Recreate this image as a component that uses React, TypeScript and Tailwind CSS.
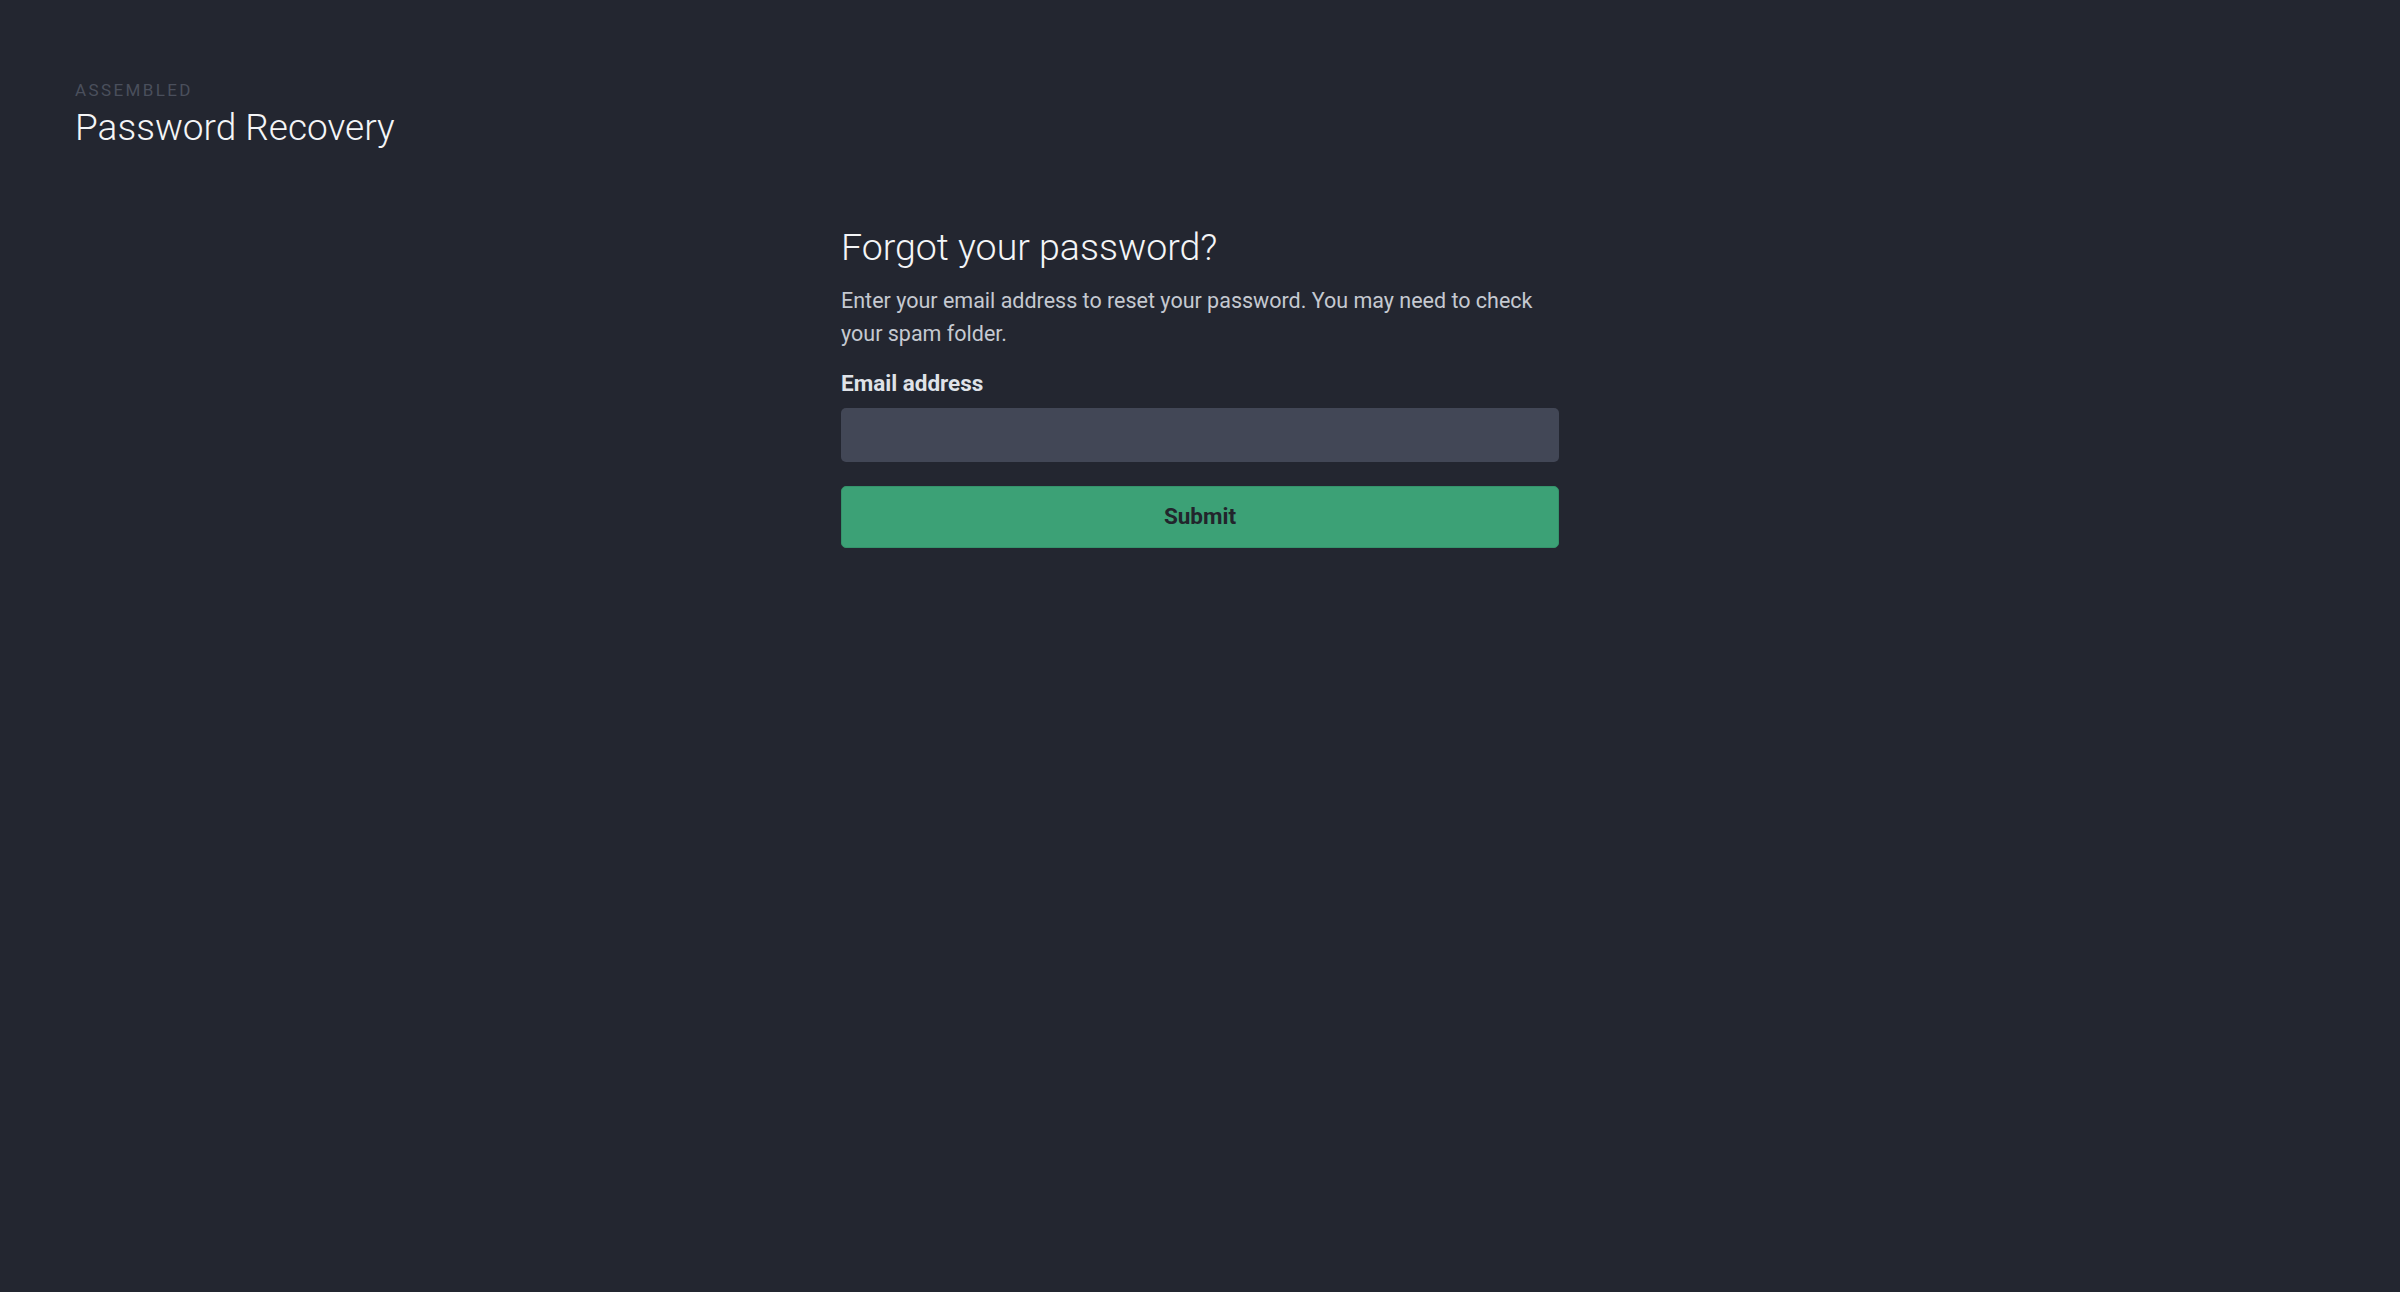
export default function App() {
  return (
    <div className="min-h-screen bg-[#232630] font-['Roboto','Noto_Sans',sans-serif] text-white">
      <header className="px-[75px] pt-[80px]">
        <div className="text-[17px] leading-[20px] tracking-[0.14em] text-[#4a4f5c] uppercase">Assembled</div>
        <h1 className="mt-[5px] text-[37px] leading-[46px] font-light text-[#f4f5f7]">Password Recovery</h1>
      </header>

      <main className="mx-auto mt-[73px] w-[718px]">
        <h2 className="text-[37.5px] leading-[46px] font-light text-[#f4f5f7]">Forgot your password?</h2>
        <p className="mt-[14px] text-[21.5px] leading-[33px] text-[#c5c9d1]">
          Enter your email address to reset your password. You may need to check your spam folder.
        </p>
        <form className="mt-[18px] flex flex-col" onSubmit={(e) => e.preventDefault()}>
          <label htmlFor="email" className="text-[22.5px] leading-[30px] font-bold text-[#dfe2e8]">
            Email address
          </label>
          <input
            id="email"
            type="email"
            className="mt-[10px] h-[54px] w-full rounded-[5px] bg-[#424756] px-4 text-[20px] text-white outline-none"
          />
          <button
            type="submit"
            className="mt-[24px] h-[62px] w-full rounded-[5px] border border-[#35936b] bg-[#3ca176] text-[22.5px] font-bold text-[#22252c]"
          >
            Submit
          </button>
        </form>
      </main>
    </div>
  );
}
